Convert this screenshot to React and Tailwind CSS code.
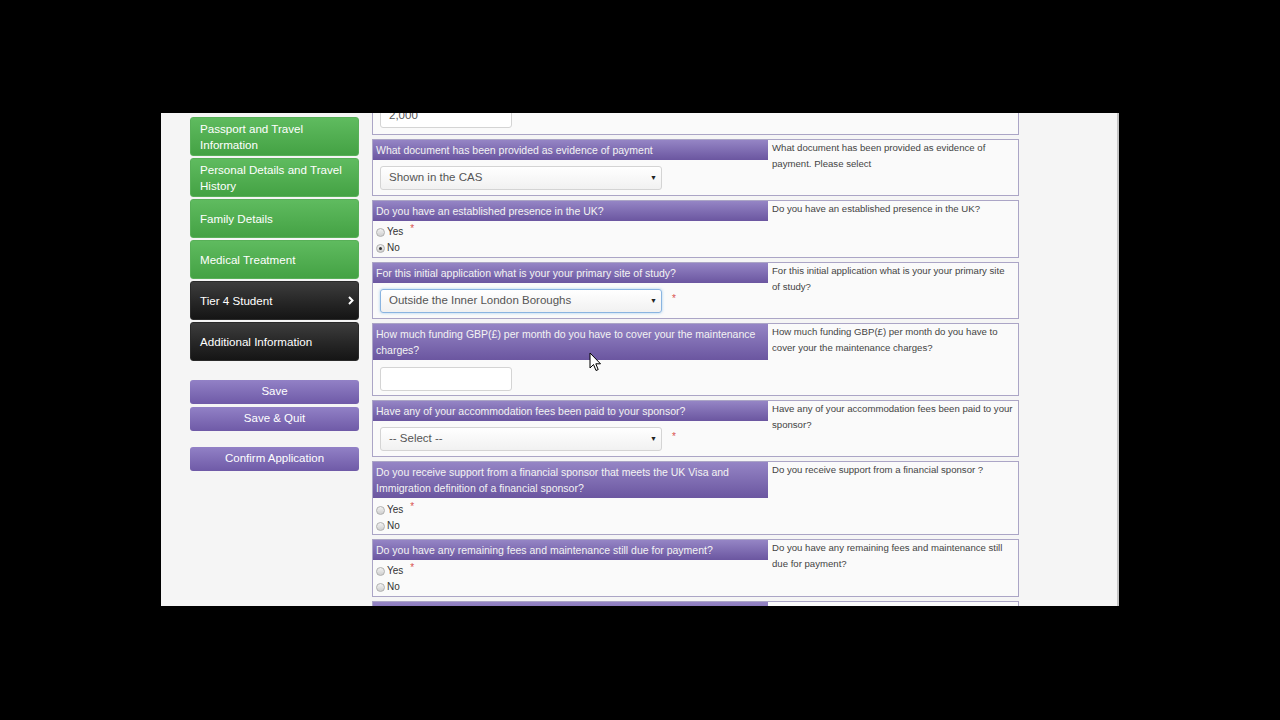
import React from "react";

const navItems = [
  { label: "Passport and Travel Information", dark: false },
  { label: "Personal Details and Travel History", dark: false },
  { label: "Family Details", dark: false },
  { label: "Medical Treatment", dark: false },
  { label: "Tier 4 Student", dark: true, active: true },
  { label: "Additional Information", dark: true },
];

function Chevron() {
  return (
    <svg width="6" height="9" viewBox="0 0 6 9" className="shrink-0">
      <path d="M1 1 L4.5 4.5 L1 8" stroke="#fff" strokeWidth="2" fill="none" />
    </svg>
  );
}

function NavButton({ item }) {
  const color = item.dark
    ? "bg-gradient-to-b from-[#3d3d3d] to-[#151515] border-[#2a2a2a]"
    : "bg-gradient-to-b from-[#5fbb5f] to-[#44a244] border-[#58b058]";
  return (
    <div className={`h-[39px] shrink-0 rounded-[3px] border ${color} flex items-center justify-between pl-[9px] pr-[4px] text-white text-[11.6px] leading-[16px]`}>
      <span className="max-w-[150px]">{item.label}</span>
      {item.active && <Chevron />}
    </div>
  );
}

function PurpleButton({ children }) {
  return (
    <div className="h-[24px] rounded-[3px] bg-gradient-to-b from-[#9281c6] to-[#6f5aa7] flex items-center justify-center text-white text-[11.5px]">
      {children}
    </div>
  );
}

function Select({ value, focused }) {
  const ring = focused
    ? "border-[#8ab4e0] shadow-[0_0_3px_rgba(102,175,233,0.6)]"
    : "border-[#d4d4d4]";
  return (
    <div className={`w-[282px] h-[24px] rounded-[3px] border ${ring} bg-gradient-to-b from-[#ffffff] to-[#f1f1f1] flex items-center justify-between pl-[8px] pr-[4px] text-[11.5px] text-[#555]`}>
      <span>{value}</span>
      <span className="text-[7px] text-[#222]">▼</span>
    </div>
  );
}

function Star({ className }) {
  return <span className={`text-[#d9534f] text-[10px] relative -top-[3px] ${className}`}>*</span>;
}

function Radio({ label, checked, star }) {
  return (
    <div className="h-[16px] flex items-center pl-[3px] text-[10px] text-[#333]">
      <span className="w-[9px] h-[9px] rounded-full border border-[#b0b0b0] bg-gradient-to-b from-[#f2f2f2] to-[#cfcfcf] flex items-center justify-center mt-[2px]">
        {checked && <span className="w-[3px] h-[3px] rounded-full bg-[#333]" />}
      </span>
      <span className="ml-[2px]">{label}</span>
      {star && <Star className="ml-[7px]" />}
    </div>
  );
}

function Section({ q, help, h, children }) {
  return (
    <div className={`${h} shrink-0 flex border border-[#aba5c6] bg-[#fafafa] overflow-hidden`}>
      <div className="w-[395px] shrink-0">
        <div className="bg-gradient-to-b from-[#9585c5] to-[#6b56a0] px-[3px] py-[2px] leading-[16px] text-[10.5px] text-[#f3f3f3]">
          {q}
        </div>
        {children}
      </div>
      <div className="flex-1 pl-[4px] pr-[4px] text-[9.6px] leading-[16px] text-[#444]">{help}</div>
    </div>
  );
}

function YesNo({ checked }) {
  return (
    <div className="pt-[2px]">
      <Radio label="Yes" star checked={checked === "yes"} />
      <Radio label="No" checked={checked === "no"} />
    </div>
  );
}

function Cursor() {
  return (
    <svg width="13" height="20" viewBox="0 0 13 20" className="absolute left-[589px] top-[352px]">
      <path d="M1 1 L1 16 L4.5 12.5 L7 18.5 L9.2 17.6 L6.8 11.8 L11.5 11.8 Z" fill="#fff" stroke="#000" strokeWidth="1" strokeLinejoin="round" />
    </svg>
  );
}

export default function App() {
  return (
    <div className="relative w-[1280px] h-[720px] bg-black pt-[113px] pl-[161px] font-['Liberation_Sans',Arial,sans-serif]">
      <div className="w-[958px] h-[493px] bg-[#f5f5f5] border-r-2 border-[#c4c4c4] overflow-hidden flex items-start">
        {/* sidebar */}
        <aside className="w-[169px] ml-[29px] pt-[4px] shrink-0">
          <div className="flex flex-col gap-[2px]">
            {navItems.map((item) => (
              <NavButton key={item.label} item={item} />
            ))}
          </div>
          <div className="mt-[19px] flex flex-col gap-[3px]">
            <PurpleButton>Save</PurpleButton>
            <PurpleButton>Save &amp; Quit</PurpleButton>
          </div>
          <div className="mt-[16px]">
            <PurpleButton>Confirm Application</PurpleButton>
          </div>
        </aside>

        {/* form */}
        <main className="ml-[13px] w-[647px] shrink-0 -mt-[18px] flex flex-col gap-[4px]">
          <div className="h-[40px] shrink-0 border border-[#aba5c6] bg-[#fafafa] pt-[8px] pl-[7px]">
            <div className="w-[132px] h-[24px] rounded-[3px] border border-[#d4d4d4] bg-white flex items-center pl-[8px] text-[11.5px] text-[#555]">
              2,000
            </div>
          </div>

          <Section
            h="h-[57px]"
            q="What document has been provided as evidence of payment"
            help="What document has been provided as evidence of payment. Please select"
          >
            <div className="pl-[7px] pt-[6px]">
              <Select value="Shown in the CAS" />
            </div>
          </Section>

          <Section
            h="h-[58px]"
            q="Do you have an established presence in the UK?"
            help="Do you have an established presence in the UK?"
          >
            <YesNo checked="no" />
          </Section>

          <Section
            h="h-[57px]"
            q="For this initial application what is your your primary site of study?"
            help="For this initial application what is your your primary site of study?"
          >
            <div className="pl-[7px] pt-[6px] flex items-center">
              <Select value="Outside the Inner London Boroughs" focused />
              <Star className="ml-[10px]" />
            </div>
          </Section>

          <Section
            h="h-[73px]"
            q="How much funding GBP(£) per month do you have to cover your the maintenance charges?"
            help="How much funding GBP(£) per month do you have to cover your the maintenance charges?"
          >
            <div className="pl-[7px] pt-[7px]">
              <div className="w-[132px] h-[24px] rounded-[3px] border border-[#d4d4d4] bg-white" />
            </div>
          </Section>

          <Section
            h="h-[57px]"
            q="Have any of your accommodation fees been paid to your sponsor?"
            help="Have any of your accommodation fees been paid to your sponsor?"
          >
            <div className="pl-[7px] pt-[6px] flex items-center">
              <Select value="-- Select --" />
              <Star className="ml-[10px]" />
            </div>
          </Section>

          <Section
            h="h-[74px]"
            q="Do you receive support from a financial sponsor that meets the UK Visa and Immigration definition of a financial sponsor?"
            help="Do you receive support from a financial sponsor ?"
          >
            <div className="pt-[3px]">
              <Radio label="Yes" star />
              <Radio label="No" />
            </div>
          </Section>

          <Section
            h="h-[58px]"
            q="Do you have any remaining fees and maintenance still due for payment?"
            help="Do you have any remaining fees and maintenance still due for payment?"
          >
            <YesNo />
          </Section>

          <Section
            h="h-[57px]"
            q="Do you have any other financial sponsor?"
            help="Do you have any other financial sponsor?"
          >
            <YesNo />
          </Section>
        </main>
      </div>
      <Cursor />
    </div>
  );
}
